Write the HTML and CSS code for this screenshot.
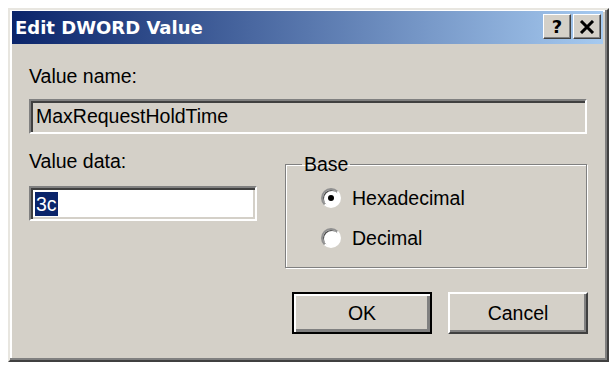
FILE: index.html
```
<!doctype html>
<html lang="en">
    <head>
        <meta charset="UTF-8" />
        <meta name="viewport" content="width=device-width, initial-scale=1.0" />
        <title>Edit DWORD Value</title>
        <link rel="stylesheet" href="styles.css">
    </head>
    <body>
        <section class="dialog">
            <header class="titlebar">
                <span class="title">Edit DWORD Value</span>
                <div class="caption-buttons">
                    <button class="caption-btn help">?</button>
                    <button class="caption-btn close">
                        <svg viewBox="0 0 16 14" width="16" height="14">
                            <path d="M2 1 14 13M14 1 2 13" stroke="#000" stroke-width="3" fill="none" />
                        </svg>
                    </button>
                </div>
            </header>

            <div class="content">
                <div class="label">Value name:</div>
                <div class="field readonly">MaxRequestHoldTime</div>

                <div class="row">
                    <div class="data-col">
                        <div class="label">Value data:</div>
                        <div class="field data"><span class="selected">3c</span></div>
                    </div>

                    <fieldset class="base">
                        <legend>Base</legend>
                        <label class="radio">
                            <span class="dot checked"></span>
                            Hexadecimal
                        </label>
                        <label class="radio">
                            <span class="dot"></span>
                            Decimal
                        </label>
                    </fieldset>
                </div>

                <div class="actions">
                    <button class="btn default">OK</button>
                    <button class="btn">Cancel</button>
                </div>
            </div>
        </section>
    </body>
</html>
```

FILE: styles.css
```
* {
    box-sizing: border-box;
}

body,
html {
    margin: 0;
    padding: 0;
    background: #fff;
}

body {
    padding: 8px;
    font-family: "Liberation Sans", Arial, sans-serif;
    font-size: 19.5px;
    color: #000;
}

.dialog {
    width: 601px;
    height: 354px;
    background: #d4d0c8;
    border: 2px solid;
    border-color: #e8e6e0 #404040 #404040 #e8e6e0;
    box-shadow: inset -2px -2px 0 #808080, inset 2px 2px 0 #fff;
    padding: 1px 4px 0 2px;
    display: flex;
    flex-direction: column;
}

.titlebar {
    height: 33px;
    flex: none;
    display: flex;
    align-items: flex-start;
    background: linear-gradient(to right, #0a246a, #a6caf0);
    padding: 0 2px 0 3px;
}

.title {
    font-family: "DejaVu Sans", Verdana, sans-serif;
    font-weight: bold;
    font-size: 18px;
    line-height: 33px;
    color: #fff;
}

.caption-buttons {
    margin-left: auto;
    display: flex;
    gap: 2px;
    padding-top: 3px;
}

.caption-btn {
    width: 28px;
    height: 25px;
    padding: 0;
    background: #d4d0c8;
    border: 1px solid;
    border-color: #fff #404040 #404040 #fff;
    box-shadow: inset -1px -1px 0 #808080;
    display: flex;
    align-items: center;
    justify-content: center;
    font-family: "DejaVu Sans", sans-serif;
    font-weight: bold;
    font-size: 18px;
    line-height: 1;
    color: #000;
}

.content {
    flex: 1;
    padding: 22px 15px 0 17px;
}

.label {
    line-height: 20px;
    height: 20px;
}

.field {
    height: 35px;
    display: flex;
    align-items: center;
    border: 2px solid;
    border-color: #808080 #fff #fff #808080;
    box-shadow: inset 2px 2px 0 #404040, inset -2px -2px 0 #d4d0c8;
    padding: 0 4px;
    white-space: nowrap;
}

.field.readonly {
    margin-top: 13px;
    width: 558px;
    background: #d4d0c8;
    padding-left: 5px;
}

.row {
    margin-top: 17px;
    display: grid;
    grid-template-columns: 228px 302px;
    column-gap: 28px;
    align-items: start;
}

.field.data {
    margin-top: 15px;
    background: #fff;
    padding-left: 4px;
}

.selected {
    background: #0a246a;
    color: #fff;
    line-height: 24px;
    padding: 0 1px;
}

.base {
    margin: 3px 0 0;
    height: 114px;
    border: 1px solid #808080;
    box-shadow: 1px 1px 0 #fff, inset 1px 1px 0 #fff;
    padding: 12px 0 0 35px;
}

.base legend {
    padding: 0 2px;
    margin-left: -19px;
    line-height: 20px;
}

.radio {
    display: flex;
    align-items: center;
    gap: 11px;
    height: 24px;
    margin-bottom: 16px;
}

.dot {
    width: 20px;
    height: 20px;
    border-radius: 50%;
    background: #fff;
    border: 2px solid;
    border-color: #909090 #fff #fff #909090;
    box-shadow: inset 1px 1px 0 #505050;
    display: flex;
    align-items: center;
    justify-content: center;
}

.dot.checked::after {
    content: "";
    width: 6px;
    height: 6px;
    border-radius: 50%;
    background: #000;
}

.actions {
    margin-top: 24px;
    display: flex;
    justify-content: flex-end;
    gap: 16px;
}

.btn {
    width: 140px;
    height: 42px;
    background: #d4d0c8;
    font-family: "Liberation Sans", Arial, sans-serif;
    font-size: 19.5px;
    color: #000;
    border: 2px solid;
    border-color: #fff #404040 #404040 #fff;
    box-shadow: inset -2px -2px 0 #808080;
}

.btn.default {
    border: 2px solid #000;
    box-shadow: inset 2px 2px 0 #fff, inset -3px -3px 0 #808080;
}
```
